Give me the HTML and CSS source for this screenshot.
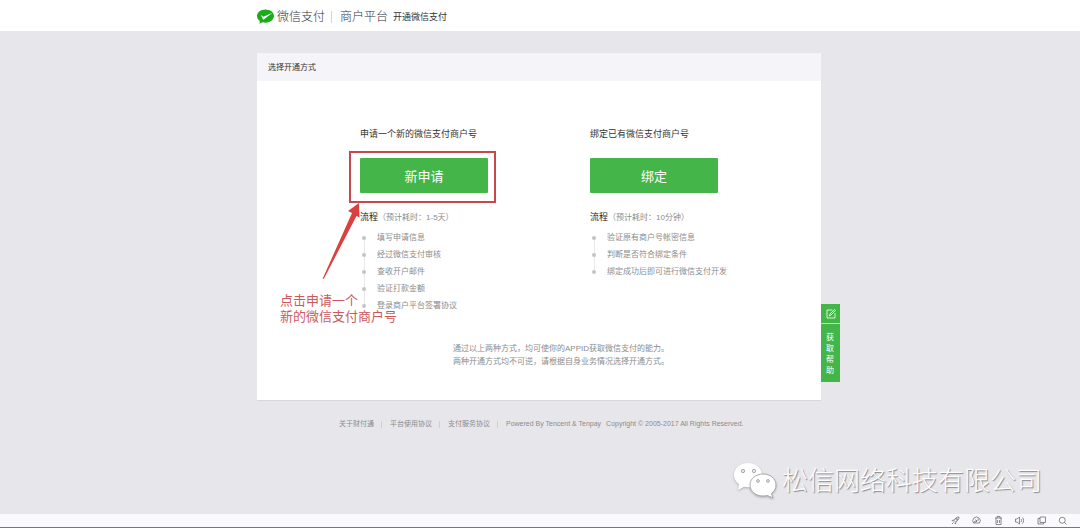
FILE: index.html
```html
<!DOCTYPE html>
<html lang="zh-CN">
<head>
    <meta charset="UTF-8">
    <meta name="viewport" content="width=device-width, initial-scale=1.0">
    <title>开通微信支付</title>
    <link rel="stylesheet" href="styles.css">
</head>
<body>
    <header class="header">
        <div class="container header-inner">
            <svg class="logo" viewBox="0 0 34 30">
                <path fill="#1aad19" d="M17 1C8 1 0 6.600 0 14c0 4.200 2.200 7.700 5.600 10L5 29.500l6-3c1.900.6 3.900.9 6 .9 9 0 17-6 17-13.400S26 1 17 1z"/>
                <path fill="#fff" d="M8 12l5 3.600L31 7.500 14 20.500c-1 .7-2 .5-2.500-.6z"/>
            </svg>
            <span class="brand">微信支付</span>
            <span class="platform">商户平台</span>
            <h1>开通微信支付</h1>
        </div>
    </header>

    <main class="container">
        <div class="card">
            <h2 class="card-title">选择开通方式</h2>
            <div class="options">
                <section class="option">
                    <h3>申请一个新的微信支付商户号</h3>
                    <button type="button" class="main-button">新申请</button>
                    <p class="flow"><strong>流程</strong>（预计耗时：1-5天）</p>
                    <ul class="steps">
                        <li>填写申请信息</li>
                        <li>经过微信支付审核</li>
                        <li>查收开户邮件</li>
                        <li>验证打款金额</li>
                        <li>登录商户平台签署协议</li>
                    </ul>
                    <div class="mark-box"></div>
                    <svg class="mark-arrow" viewBox="0 0 40 76">
                        <path fill="#d9403f" d="M38 0L27 8l4 2L1.500 76l1.500-.5L35.500 13l3 1.500z"/>
                    </svg>
                    <p class="mark-text">点击申请一个<br>新的微信支付商户号</p>
                </section>
                <section class="option">
                    <h3>绑定已有微信支付商户号</h3>
                    <button type="button" class="main-button">绑定</button>
                    <p class="flow"><strong>流程</strong>（预计耗时：10分钟）</p>
                    <ul class="steps">
                        <li>验证原有商户号帐密信息</li>
                        <li>判断是否符合绑定条件</li>
                        <li>绑定成功后即可进行微信支付开发</li>
                    </ul>
                </section>
            </div>
            <p class="note">通过以上两种方式，均可使你的APPID获取微信支付的能力。<br>两种开通方式均不可逆，请根据自身业务情况选择开通方式。</p>
            <a href="#" class="help">
                <svg class="help-icon" viewBox="0 0 20 20" fill="none" stroke="#fff" stroke-width="1.600">
                    <path d="M13 2H2v16h16V8M7 14l1-4 9-9 2 2-9 9z"/>
                </svg>
                <span class="help-text">获取帮助</span>
            </a>
        </div>
        <footer class="footer">
            <a href="#">关于财付通</a>
            <a href="#">平台使用协议</a>
            <a href="#">支付服务协议</a>
            <span>Powered By Tencent &amp; Tenpay</span>
            <span class="copyright">Copyright © 2005-2017 All Rights Reserved.</span>
        </footer>
    </main>

    <div class="watermark">
        <svg class="watermark-icon" viewBox="0 0 44 38">
            <path fill="#fff" d="M15 1C7 1 1 6.300 1 13c0 3.800 2 7 5 9.300L5 28l6-3.200c1.300.3 2.600.5 4 .5 8 0 14-5.500 14-12.300S23 1 15 1z"/>
            <path fill="#fff" stroke="#aaa9ae" d="M30 12c-7.300 0-13 4.800-13 11s5.700 11 13 11c1.500 0 3-.2 4.300-.6L40 36l-1.600-4.500c2.800-2 4.600-5 4.600-8.500 0-6.200-5.700-11-13-11z"/>
            <g fill="#e7e6eb" stroke="#99989d" stroke-width=".8">
                <circle cx="10" cy="9" r="1.700"/>
                <circle cx="21" cy="9" r="1.700"/>
                <circle cx="25" cy="19" r="1.400"/>
                <circle cx="35" cy="19" r="1.400"/>
            </g>
        </svg>
        <span>松信网络科技有限公司</span>
    </div>

    <div class="statusbar">
        <div class="tools">
            <svg viewBox="0 0 18 18"><path d="M16 2c-5 0-8 3-10 7l3 3c4-2 7-5 7-10zM6 8L2 9l2 2M10 12l-1 4-2-2M5 13l-3 3"/><circle cx="11.500" cy="6.500" r="1.500"/></svg>
            <svg viewBox="0 0 18 18"><path d="M3 14a7.500 7.500 0 1 1 12 0zM3 14l3-4h4M7 7l3 3-3 3M12 5v5"/></svg>
            <svg viewBox="0 0 18 18"><path d="M2 4h14M6 4V1h6v3M4 4v13h10V4M7 8v6M11 8v6"/></svg>
            <svg viewBox="0 0 18 18"><path d="M1 6h3l5-4v14l-5-4H1zM12 6c1.500 2 1.500 4 0 6M15 3c3 4 3 8 0 12"/></svg>
            <svg viewBox="0 0 18 18"><path d="M6 2h11v11H6zM6 5H2v11h11v-3"/></svg>
            <svg viewBox="0 0 18 18"><circle cx="8.500" cy="8.500" r="6"/><path d="M13 13l4 4"/></svg>
        </div>
    </div>
</body>
</html>
```

FILE: styles.css
```css
* {
    box-sizing: border-box;
}
body {
    position: relative;
    display: flex;
    flex-direction: column;
    min-height: 100vh;
    margin: 0;
    font-family: "Liberation Sans", "Noto Sans CJK SC", sans-serif;
    font-size: 8px;
    color: #8c8c8c;
    background-color: #e7e6eb;
}
h1, h2, h3, p, ul {
    margin: 0;
    padding: 0;
    font-weight: normal;
}
a {
    color: inherit;
    text-decoration: none;
}
.container {
    width: 100%;
    max-width: 566px;
    margin: 0 auto;
    padding-right: 2px;
}
.header {
    background: #ffffff;
}
.header-inner {
    display: flex;
    align-items: center;
    height: 31px;
    padding-top: 2px;
    font-size: 12px;
    line-height: 12px;
    color: #333333;
}
.logo {
    width: 17px;
    height: 15px;
    margin-right: 3px;
}
.brand, .platform {
    font-weight: 300;
}
.platform {
    margin-left: 6px;
    padding-left: 8px;
    border-left: 1px solid #d5d5d5;
}
.header h1 {
    margin-left: 5px;
    font-size: 9px;
    color: #333333;
}

/* card */
.card {
    position: relative;
    margin-top: 22px;
    padding-bottom: 32px;
    background: #ffffff;
    border-bottom: 1px solid #d8d7dc;
}
.card-title {
    padding: 2px 0 0 11px;
    font-size: 8px;
    line-height: 26px;
    color: #333333;
    background: #f5f4f9;
}
.options {
    display: flex;
    padding: 47px 0 0 103px;
}
.option {
    position: relative;
    width: 230px;
}
.option h3 {
    font-size: 9px;
    line-height: 12px;
    color: #333333;
}
.main-button {
    display: block;
    width: 128px;
    height: 35px;
    margin: 18px 0;
    padding: 0;
    font-family: inherit;
    font-size: 13px;
    color: #ffffff;
    background: #44b549;
    border: none;
    border-radius: 1px;
    cursor: pointer;
}
.main-button:hover {
    background: #3da642;
}
.flow {
    line-height: 12px;
}
.flow strong {
    font-size: 9px;
    font-weight: normal;
    color: #222222;
}
.steps {
    position: relative;
    margin-top: 5px;
    list-style: none;
}
.steps li {
    position: relative;
    padding-left: 17px;
    line-height: 17px;
}
.steps li::before {
    content: "";
    position: absolute;
    top: 7px;
    left: 2px;
    width: 4px;
    height: 4px;
    border-radius: 50%;
    background: #c4c4c8;
}
.steps::before {
    content: "";
    position: absolute;
    top: 9px;
    bottom: 9px;
    left: 4px;
    border-left: 1px solid #e8e8ea;
}
.note {
    margin: 28px 0 0 196px;
    line-height: 13px;
}

/* red marks over the first option */
.mark-box {
    position: absolute;
    top: 23px;
    left: -11px;
    width: 147px;
    height: 52px;
    border: 2px solid #c9484d;
    pointer-events: none;
}
.mark-arrow {
    position: absolute;
    top: 75px;
    left: -39px;
    width: 40px;
    height: 76px;
}
.mark-text {
    position: absolute;
    top: 165px;
    left: -80px;
    font-size: 13px;
    line-height: 16px;
    white-space: nowrap;
    color: #cc5a5c;
}

/* help tab on the card's right edge */
.help {
    position: absolute;
    top: 251px;
    left: 100%;
    display: flex;
    flex-direction: column;
    align-items: center;
    width: 19px;
    color: #ffffff;
    background: #44b549;
}
.help-icon {
    width: 10px;
    height: 10px;
    margin: 5px 0 4px;
}
.help-text {
    width: 100%;
    padding: 8px 6px 6px 5px;
    line-height: 11px;
    border-top: 1px solid #b4e0b6;
}

.footer {
    display: flex;
    margin-top: 17px;
    padding-left: 82px;
    font-size: 7px;
    line-height: 12px;
    white-space: nowrap;
}
.footer a {
    display: flex;
    align-items: center;
}
.footer a::after {
    content: "";
    height: 7px;
    margin: 0 8px 0 7px;
    border-left: 1px solid #d0cfd4;
}
.copyright {
    margin-left: 5px;
}

.watermark {
    position: absolute;
    right: 38px;
    bottom: 28px;
    display: flex;
    align-items: center;
    gap: 5px;
    font-size: 26px;
    font-weight: 300;
    line-height: 38px;
    color: #ffffff;
    text-shadow: 1px 1px 1px #88878c;
}
.watermark-icon {
    width: 44px;
    height: 38px;
    filter: drop-shadow(0 1px 1px #aaa9ae);
}

.statusbar {
    display: flex;
    justify-content: flex-end;
    margin-top: auto;
    padding: 2px 13px 2px 0;
    background: #fafafd;
    border-bottom: 1px solid #77767a;
}
.tools {
    display: flex;
    justify-content: space-between;
    width: 116px;
}
.tools svg {
    width: 9px;
    height: 9px;
    fill: none;
    stroke: #66656a;
    stroke-width: 1.5;
}
```
